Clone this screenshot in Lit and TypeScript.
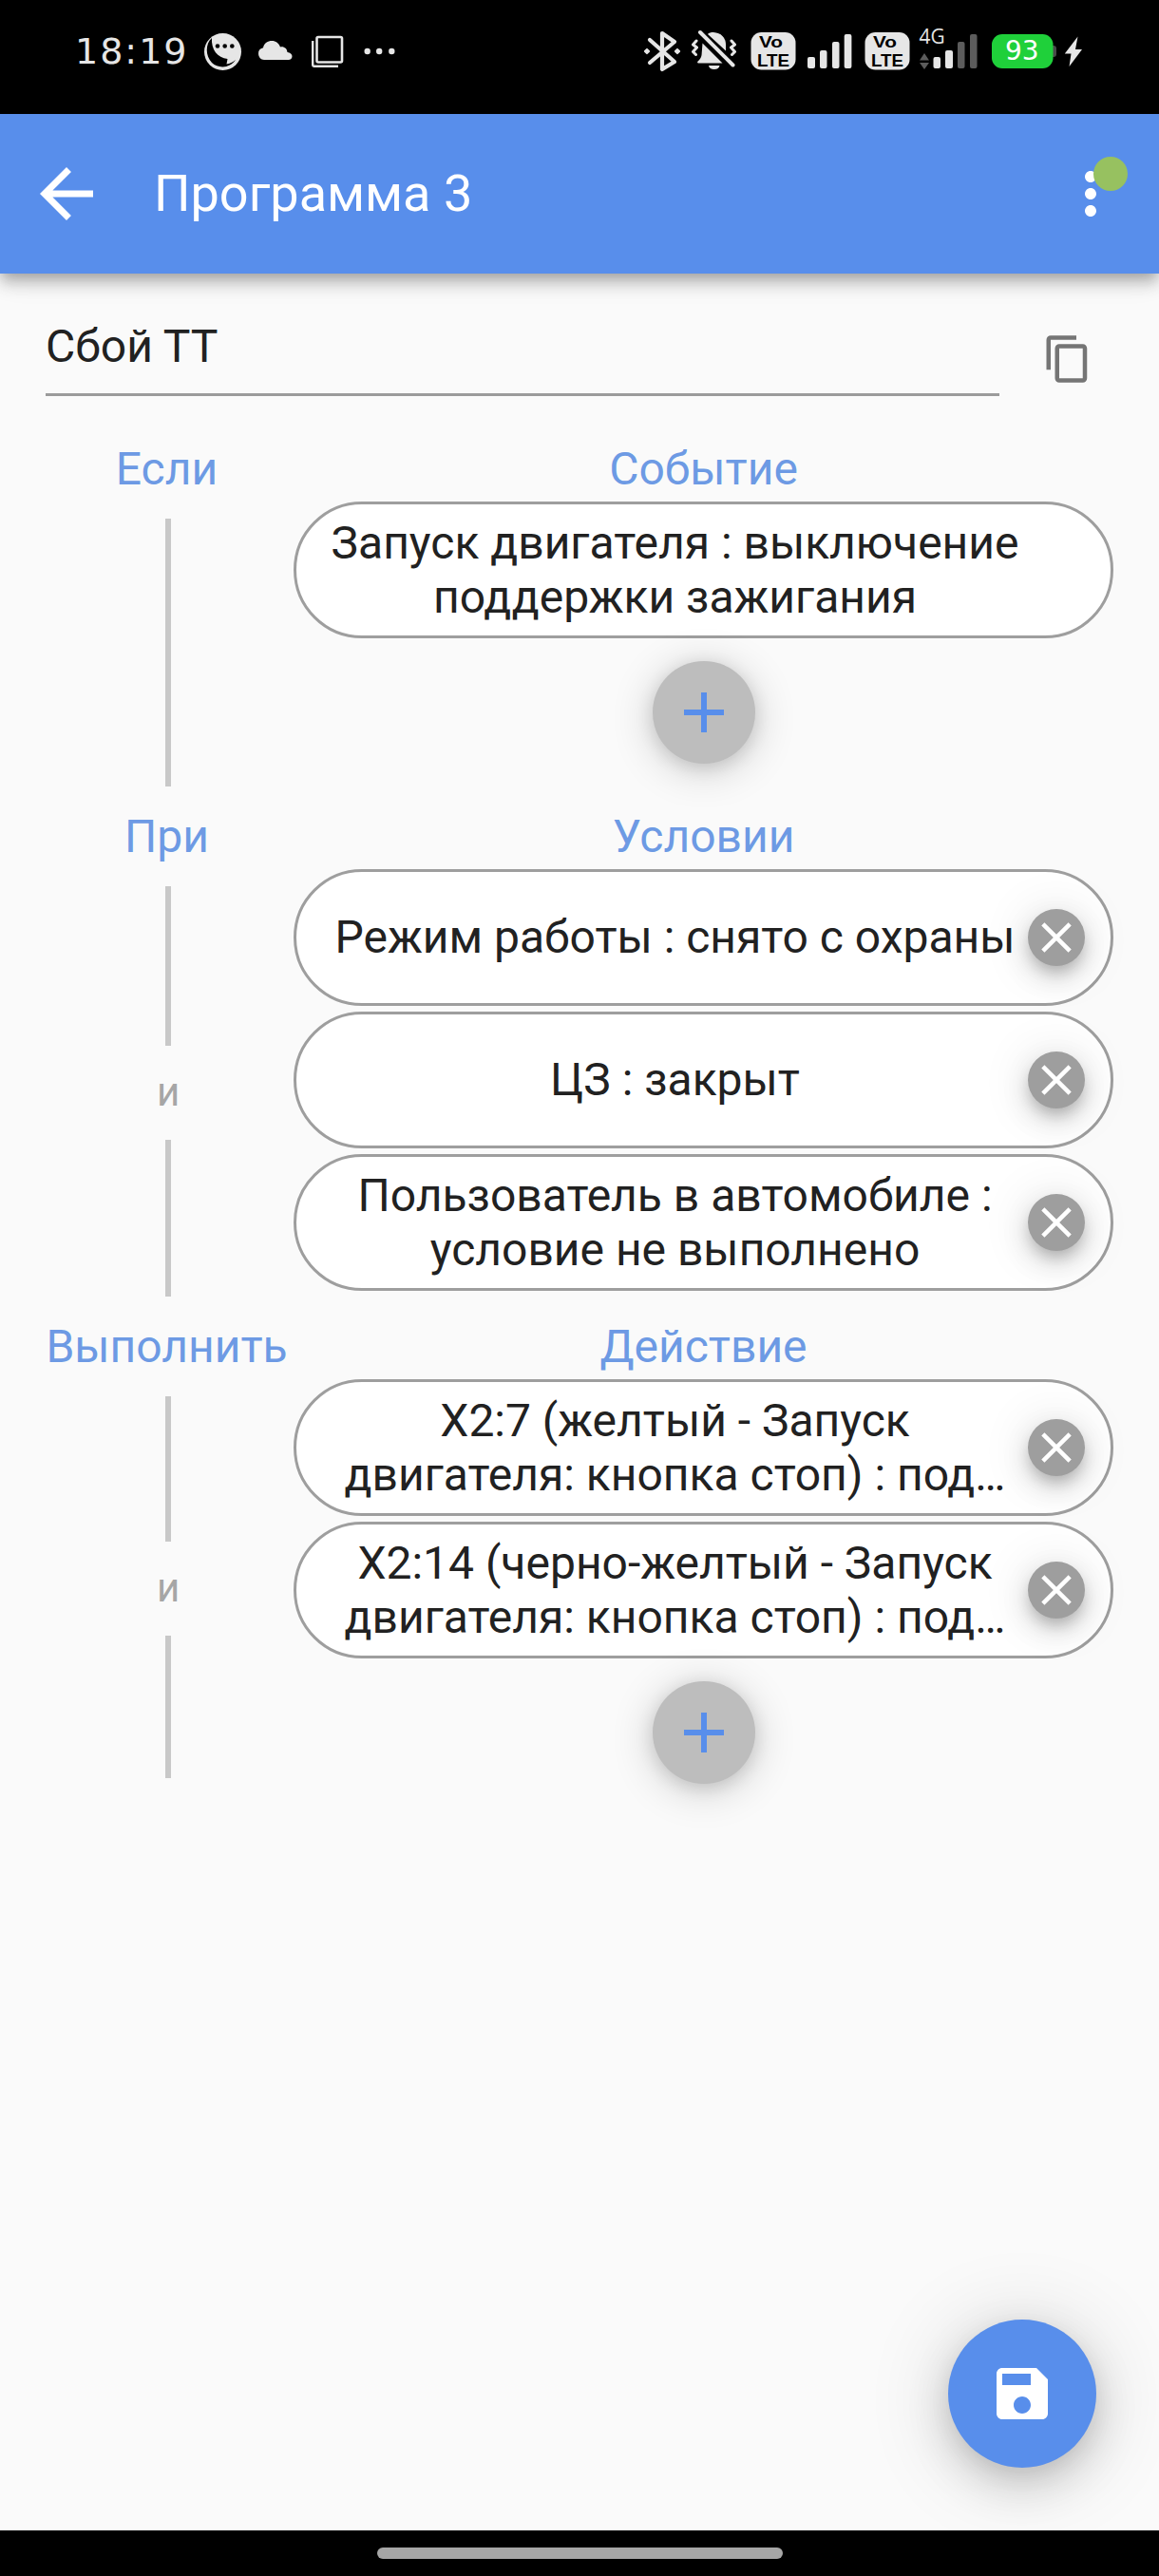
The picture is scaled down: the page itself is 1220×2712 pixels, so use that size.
import { LitElement, css, html, nothing } from 'lit';
import { property, customElement } from 'lit/decorators.js';

interface Section {
  title: string;
  subtitle: string;
  items: string[][];
  removable: boolean;
  canAdd: boolean;
  joined: boolean;
  short: boolean;
}

const SECTIONS: Section[] = [
  {
    title: 'Если',
    subtitle: 'Событие',
    items: [['Запуск двигателя : выключение', 'поддержки зажигания']],
    removable: false,
    canAdd: true,
    joined: false,
    short: false,
  },
  {
    title: 'При',
    subtitle: 'Условии',
    items: [
      ['Режим работы : снято с охраны'],
      ['ЦЗ : закрыт'],
      ['Пользователь в автомобиле :', 'условие не выполнено'],
    ],
    removable: true,
    canAdd: false,
    joined: true,
    short: false,
  },
  {
    title: 'Выполнить',
    subtitle: 'Действие',
    items: [
      ['X2:7 (желтый - Запуск', 'двигателя: кнопка стоп) : под…'],
      ['X2:14 (черно-желтый - Запуск', 'двигателя: кнопка стоп) : под…'],
    ],
    removable: true,
    canAdd: true,
    joined: true,
    short: true,
  },
];

const ICONS: Record<string, string> = {
  back: 'M20 11H7.83l5.59-5.59L12 4l-8 8 8 8 1.41-1.41L7.83 13H20v-2z',
  more: 'M12 8c1.1 0 2-.9 2-2s-.9-2-2-2-2 .9-2 2 .9 2 2 2zm0 2c-1.1 0-2 .9-2 2s.9 2 2 2 2-.9 2-2-.9-2-2-2zm0 6c-1.1 0-2 .9-2 2s.9 2 2 2 2-.9 2-2-.9-2-2-2z',
  copy: 'M16 1H4c-1.1 0-2 .9-2 2v14h2V3h12V1zm3 4H8c-1.1 0-2 .9-2 2v14c0 1.1.9 2 2 2h11c1.1 0 2-.9 2-2V7c0-1.1-.9-2-2-2zm0 16H8V7h11v14z',
  add: 'M19 13h-6v6h-2v-6H5v-2h6V5h2v6h6v2z',
  close: 'M19 6.41L17.59 5 12 10.59 6.41 5 5 6.41 10.59 12 5 17.59 6.41 19 12 13.41 17.59 19 19 17.59 13.41 12z',
  save: 'M17 3H5c-1.11 0-2 .9-2 2v14c0 1.1.89 2 2 2h14c1.1 0 2-.9 2-2V7l-4-4zm-5 16c-1.66 0-3-1.34-3-3s1.34-3 3-3 3 1.34 3 3-1.34 3-3 3zm3-10H5V5h10v4z',
};

@customElement('app-icon')
export class AppIcon extends LitElement {
  @property({ type: String }) name = '';

  static styles = css`
    :host {
      display: block;
      width: 72px;
      height: 72px;
    }

    svg {
      display: block;
      width: 100%;
      height: 100%;
      fill: currentColor;
    }
  `;

  render() {
    return html`<svg viewBox="0 0 24 24"><path d=${ICONS[this.name]}></path></svg>`;
  }
}

@customElement('status-bar')
export class StatusBar extends LitElement {
  static styles = css`
    :host {
      display: flex;
      justify-content: space-between;
      align-items: center;
      box-sizing: border-box;
      height: 120px;
      padding: 0 80px 12px 79px;
      background: #000;
      color: #e6e6e6;
    }

    .group {
      display: flex;
      align-items: center;
    }

    .left {
      gap: 16px;
    }

    .right {
      gap: 8px;
    }

    .time {
      width: 120px;
      font: 38px/48px 'DejaVu Sans', sans-serif;
      letter-spacing: 2px;
      white-space: nowrap;
    }

    svg {
      display: block;
      height: 48px;
      fill: currentColor;
      overflow: visible;
    }

    .line {
      fill: none;
      stroke: currentColor;
    }

    .dark {
      fill: #000;
    }

    .dim {
      fill: #5c5c5c;
    }

    .vo,
    .lte {
      font-family: 'Liberation Sans', sans-serif;
      font-weight: 700;
      fill: #000;
    }

    .vo {
      font-size: 16px;
    }

    .lte {
      font-size: 18px;
    }

    .net {
      font: 21px 'Open Sans', sans-serif;
    }

    .level {
      font: 28px 'DejaVu Sans', sans-serif;
      fill: #fff;
    }
  `;

  private volte(width: number, x: number) {
    return html`
      <svg width=${width} viewBox="${-x} 0 ${width} 48">
        <rect x="0.5" y="4" width="47" height="39.5" rx="11"></rect>
        <text class="vo" x="9" y="20" textLength="25" lengthAdjust="spacingAndGlyphs">Vo</text>
        <text class="lte" x="7" y="40" textLength="34" lengthAdjust="spacingAndGlyphs">LTE</text>
      </svg>
    `;
  }

  render() {
    return html`
      <div class="group left">
        <span class="time">18:19</span>
        <svg width="40" viewBox="0 0 40 48">
          <circle cx="19.5" cy="24.5" r="19.5"></circle>
          <path class="dark" d="M8 10C1 16 1 29 8 36c7 6.500 19 6 25-3-3 2.500-6 4-9.500 4.500l1-5.500C14 31 7 22 8 10z"></path>
          <circle class="dark" cx="14" cy="18.500" r="2.300"></circle>
          <circle class="dark" cx="21.700" cy="18.500" r="2.300"></circle>
          <circle class="dark" cx="29.300" cy="18.500" r="2.300"></circle>
        </svg>
        <svg width="40" viewBox="0 0 40 48">
          <path d="M7 33a6.500 6.500 0 0 1-1-12.800C7 15 11 13 15 13c4.500 0 7.500 2.500 9 6.500 4-.8 7 1.500 7.500 5.500 3 .5 5 2.200 5 4.200 0 2.300-1.500 3.800-4 3.800z"></path>
        </svg>
        <svg width="40" viewBox="0 0 40 48">
          <rect class="line" x="6.500" y="9" width="26.500" height="26.500" rx="1.500" stroke-width="2.600"></rect>
          <path class="line" d="M2.200 13v25.500q0 1.200 1.200 1.200H29" stroke-width="2.400"></path>
        </svg>
        <svg width="40" viewBox="0 0 40 48">
          <circle cx="3.700" cy="24" r="3.200"></circle>
          <circle cx="16.200" cy="24" r="3.200"></circle>
          <circle cx="29.300" cy="24" r="3.200"></circle>
        </svg>
      </div>
      <div class="group right">
        <svg width="42" viewBox="0 0 42 48">
          <path class="line" d="M8 12l26 23-13 8V5l13 9L8 36" stroke-width="4.200" stroke-linejoin="round" stroke-linecap="round"></path>
          <rect x="2.500" y="21.500" width="5" height="5" rx="1" transform="rotate(45 5 24)"></rect>
          <rect x="34.500" y="21.500" width="5" height="5" rx="1" transform="rotate(45 37 24)"></rect>
        </svg>
        <svg width="52" viewBox="0 0 52 48">
          <path d="M19 6c1-1.500 3.500-2 6-2 8 .5 13 5.500 13 13v6.500zM13.500 15.500L34.500 36.500H9c-.8 0-1.200-1-.6-1.700C11.500 32 12.500 30 12.700 26z"></path>
          <path d="M20 39h11.500a5.800 4.500 0 0 1-11.500 0z"></path>
          <path class="line" d="M11 4l34.500 34.500" stroke-width="4" stroke-linecap="round"></path>
          <path class="line" d="M7 13l-3.500 4 4 3-4 4.500 3 3M44 13l3.500 4-4 3 4 4.500-3 3" stroke-width="3" stroke-linecap="round" stroke-linejoin="round"></path>
        </svg>
        ${this.volte(56, 4)}
        <svg width="52" viewBox="0 0 52 48">
          <rect x="0" y="30" width="8" height="12" rx="2"></rect>
          <rect x="13" y="23" width="7.500" height="19" rx="2"></rect>
          <rect x="26" y="14" width="7.500" height="28" rx="2"></rect>
          <rect x="38.700" y="6" width="7.700" height="36" rx="2"></rect>
        </svg>
        ${this.volte(48, 0)}
        <svg width="64" viewBox="0 0 64 48">
          <text class="net" x="1.500" y="16" textLength="27" lengthAdjust="spacingAndGlyphs">4G</text>
          <path class="dim" d="M2 33.500l5-7.500 5 7.500zM2 36h10l-5 7z"></path>
          <rect x="16.500" y="30" width="7.500" height="12" rx="2"></rect>
          <rect x="29" y="23" width="8" height="19" rx="2"></rect>
          <rect class="dim" x="42" y="14" width="7.500" height="28" rx="2"></rect>
          <rect class="dim" x="55" y="6" width="7.500" height="36" rx="2"></rect>
        </svg>
        <svg width="74" viewBox="0 0 74 48">
          <rect x="66" y="18" width="8" height="12" rx="3" fill="#4a4a4a"></rect>
          <rect x="6" y="6" width="64.500" height="36" rx="11" fill="#1fd03a"></rect>
          <text class="level" x="20" y="33">93</text>
        </svg>
        <svg width="20" viewBox="0 0 20 48">
          <path d="M14.500 8.500L.8 26.500h6.700L5.500 40 19 22h-7z"></path>
        </svg>
      </div>
    `;
  }
}

@customElement('app-header')
export class AppHeader extends LitElement {
  @property({ type: String }) pageTitle = '';

  static styles = css`
    header {
      display: flex;
      align-items: center;
      box-sizing: border-box;
      height: 168px;
      padding: 0 36px 0 28px;
      background: #588eeb;
      color: #fff;
      position: relative;
      z-index: 1;
      box-shadow:
        0 6px 12px -3px rgba(0, 0, 0, 0.2),
        0 12px 15px rgba(0, 0, 0, 0.14),
        0 3px 30px rgba(0, 0, 0, 0.12);
    }

    .back {
      width: 84px;
      height: 84px;
    }

    h1 {
      flex: 1;
      margin: 0 0 2px 50px;
      font-size: 54px;
      font-weight: 400;
    }

    .menu {
      position: relative;
    }

    .badge {
      position: absolute;
      top: -3px;
      right: -3px;
      width: 36px;
      height: 36px;
      border-radius: 50%;
      background: #97c160;
    }
  `;

  render() {
    return html`
      <header>
        <app-icon class="back" name="back"></app-icon>
        <h1>${this.pageTitle}</h1>
        <div class="menu">
          <app-icon name="more"></app-icon>
          <span class="badge"></span>
        </div>
      </header>
    `;
  }
}

@customElement('program-section')
export class ProgramSection extends LitElement {
  @property({ attribute: false }) section!: Section;

  static styles = css`
    :host {
      display: grid;
      grid-template-columns: 258px 1fr;
      grid-template-rows: 87px auto;
      padding: 0 48px;
    }

    .label {
      display: flex;
      justify-content: center;
      align-items: flex-end;
      padding: 0 3px 3px 0;
      line-height: 56px;
      color: #6d9ae4;
      white-space: nowrap;
    }

    .label.wide {
      padding: 0 0 3px 3px;
    }

    .gutter {
      display: flex;
      flex-direction: column;
      align-items: center;
      padding-top: 21px;
      margin-bottom: -3px;
    }

    .gutter.short {
      margin-bottom: 27px;
    }

    .line {
      flex: 1 1 0;
      width: 6px;
      background: #c8c8c8;
    }

    .line.first {
      flex-basis: 3px;
    }

    .and {
      height: 99px;
      box-sizing: border-box;
      padding-top: 24px;
      font-size: 42px;
      line-height: 49px;
      color: #a6a6a6;
    }

    .items {
      display: flex;
      flex-direction: column;
      gap: 6px;
      padding: 3px 0 3px 3px;
    }

    .pill {
      display: flex;
      align-items: center;
      box-sizing: border-box;
      height: 144px;
      padding: 0 27px;
      border: 3px solid #9e9e9e;
      border-radius: 72px;
      background: #fff;
    }

    .text {
      flex: 1;
      line-height: 57px;
      text-align: center;
      color: #212121;
      white-space: nowrap;
    }

    .text.single {
      padding-bottom: 2px;
    }

    .action {
      width: 60px;
      height: 60px;
    }

    .remove {
      display: flex;
      justify-content: center;
      align-items: center;
      width: 60px;
      height: 60px;
      border-radius: 50%;
      background: #9e9e9e;
      color: #fff;
      box-shadow:
        0 9px 15px -3px rgba(0, 0, 0, 0.2),
        0 12px 30px rgba(0, 0, 0, 0.14),
        0 3px 54px rgba(0, 0, 0, 0.12);
    }

    .remove app-icon {
      width: 54px;
      height: 54px;
    }

    .add {
      display: flex;
      justify-content: center;
      align-items: center;
      align-self: center;
      width: 108px;
      height: 108px;
      margin: 18px 0;
      border-radius: 50%;
      background: #bdbdbd;
      color: #588eeb;
      box-shadow:
        0 4px 18px rgba(0, 0, 0, 0.12),
        0 6px 45px rgba(0, 0, 0, 0.2);
    }
  `;

  private renderItem(lines: string[]) {
    return html`
      <div class="pill">
        <div class="text ${lines.length === 1 ? 'single' : ''}">
          ${lines.map((line) => html`<div>${line}</div>`)}
        </div>
        <div class="action">
          ${this.section.removable
            ? html`<div class="remove"><app-icon name="close"></app-icon></div>`
            : nothing}
        </div>
      </div>
    `;
  }

  render() {
    const { title, subtitle, items, canAdd, joined, short } = this.section;
    return html`
      <div class="label">${title}</div>
      <div class="label wide">${subtitle}</div>
      <div class="gutter ${short ? 'short' : ''}">
        <div class="line first"></div>
        ${joined ? html`<div class="and">и</div><div class="line"></div>` : nothing}
      </div>
      <div class="items">
        ${items.map((lines) => this.renderItem(lines))}
        ${canAdd ? html`<div class="add"><app-icon name="add"></app-icon></div>` : nothing}
      </div>
    `;
  }
}

@customElement('app-root')
export class AppRoot extends LitElement {
  static styles = css`
    :host {
      display: flex;
      flex-direction: column;
      width: 1220px;
      height: 2712px;
      overflow: hidden;
      background: #fafafa;
      color: #212121;
      font-family: Roboto, sans-serif;
      font-size: 48px;
    }

    main {
      flex: 1;
      position: relative;
    }

    .name-row {
      display: flex;
      align-items: flex-start;
      height: 150px;
      box-sizing: border-box;
      padding: 48px 69px 0 48px;
    }

    .name {
      flex: 1;
      box-sizing: border-box;
      height: 81px;
      margin-right: 45px;
      padding-top: 1px;
      border-bottom: 3px solid #9b9b9b;
      line-height: 56px;
    }

    .copy {
      width: 54px;
      height: 54px;
      margin-top: 15px;
      color: #757575;
    }

    .save {
      display: flex;
      justify-content: center;
      align-items: center;
      position: absolute;
      right: 66px;
      bottom: 66px;
      width: 156px;
      height: 156px;
      border-radius: 50%;
      background: #588eeb;
      color: #fff;
      box-shadow:
        0 9px 24px -3px rgba(0, 0, 0, 0.08),
        0 18px 48px rgba(0, 0, 0, 0.14),
        0 6px 90px rgba(0, 0, 0, 0.16);
    }

    .nav {
      display: flex;
      justify-content: center;
      align-items: center;
      position: relative;
      height: 48px;
      background: #000;
    }

    .handle {
      width: 427px;
      height: 12px;
      border-radius: 6px;
      background: #a6a6a6;
    }
  `;

  render() {
    return html`
      <status-bar></status-bar>
      <app-header pageTitle="Программа 3"></app-header>
      <main>
        <div class="name-row">
          <div class="name">Сбой ТТ</div>
          <app-icon class="copy" name="copy"></app-icon>
        </div>
        ${SECTIONS.map((section) => html`<program-section .section=${section}></program-section>`)}
        <div class="save"><app-icon name="save"></app-icon></div>
      </main>
      <div class="nav"><div class="handle"></div></div>
    `;
  }
}
